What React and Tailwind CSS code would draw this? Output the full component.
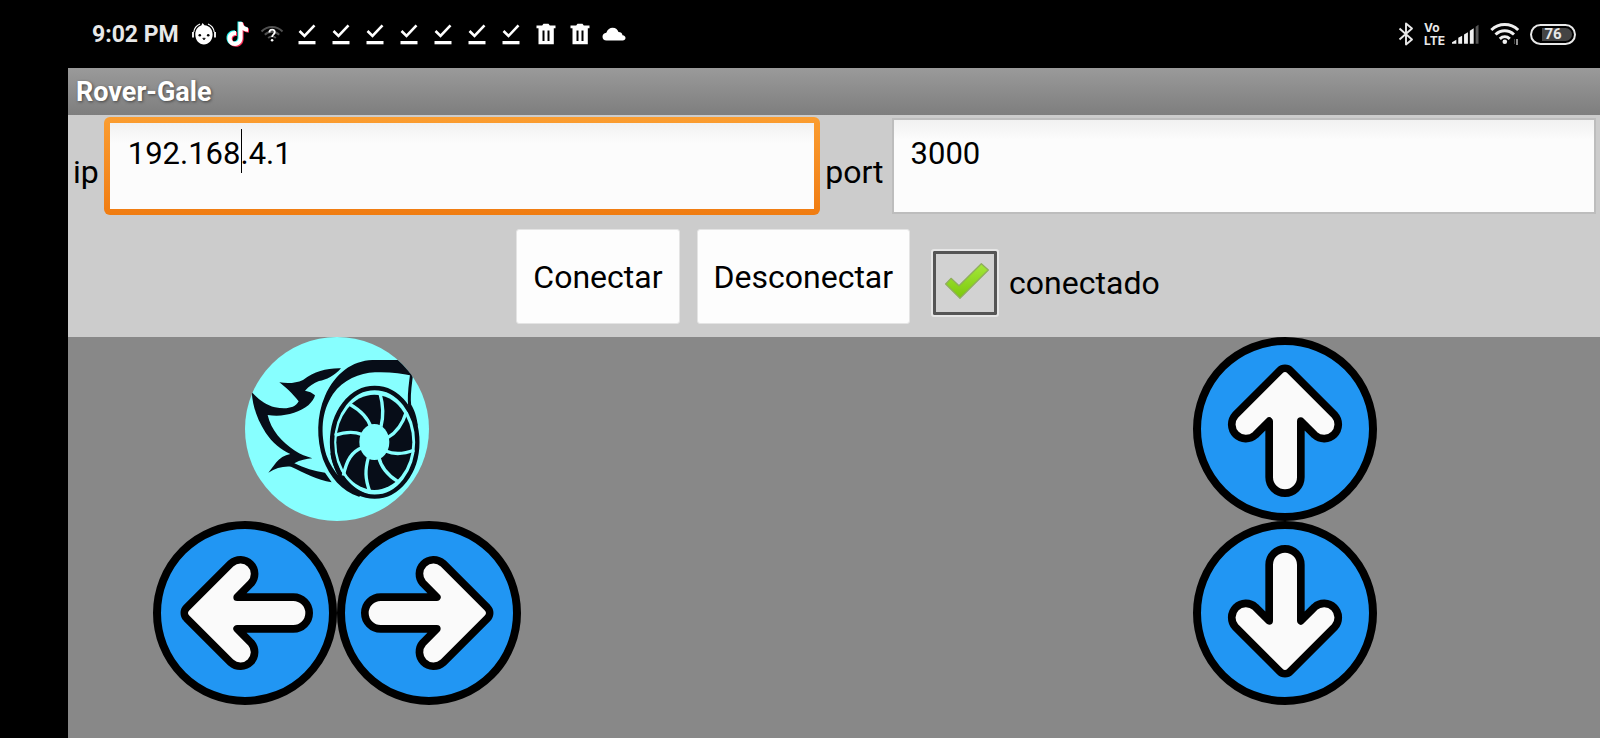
import React from 'react';

function AvatarIcon() {
  return (
    <svg viewBox="0 0 24 24" className="h-6 w-6" aria-hidden="true">
      <path d="M10.500 1l2 2.200C17.800 3.600 20.600 7.500 20.600 12.500c0 5.800-4 10-8.700 10s-8.600-4.200-8.600-10C3.300 8 5.500 4.800 9.300 3.500z" fill="#fff" />
      <path d="M8 2C4.500 3.500 2.300 6 1.800 10M16 2c3.500 1.500 5.700 4 6.200 8" stroke="#fff" fill="none" strokeWidth="1.200" />
      <path d="M1 10v5.500M23 10v5.500" stroke="#fff" strokeWidth="1.800" />
      <circle cx="7.800" cy="13.200" r="1.300" fill="#000" />
      <circle cx="16.200" cy="13.200" r="1.300" fill="#000" />
      <path d="M10.700 16.200h2.600L12 18z" fill="#000" stroke="#000" strokeWidth=".6" />
    </svg>
  );
}

const NOTE = 'M12.500 0h4.100c.2 3.200 2.400 5.300 5.400 5.600v4.200c-2 0-3.800-.6-5.400-1.700v8c0 4.300-3.200 7.900-7.600 7.900S1.500 20.500 1.500 16.500c0-4.500 3.700-7.900 8.500-7.500v4.300c-2.300-.6-4.300.9-4.300 3.100 0 1.900 1.500 3.400 3.400 3.400 2 0 3.400-1.500 3.400-3.700z';

function NoteIcon() {
  return (
    <svg viewBox="-1 -1 26 26" className="h-[26px] w-[26px]" aria-hidden="true">
      <path d={NOTE} fill="#25f4ee" transform="translate(-1 -.6)" />
      <path d={NOTE} fill="#fe2c55" transform="translate(1 .8)" />
      <path d={NOTE} fill="#fff" />
    </svg>
  );
}

function WifiUnknownIcon() {
  return (
    <svg viewBox="0 0 24 24" className="h-6 w-6" aria-hidden="true">
      <g fill="none" stroke="#505050" strokeWidth="2">
        <path d="M1.500 9.500C7.500 3.500 16.500 3.500 22.500 9.500" />
        <path d="M4.800 12.800c4.200-4 10.200-4 14.400 0" />
        <path d="M8.200 16c2.200-2 5.400-2 7.600 0" />
      </g>
      <path d="M9.300 10.500c.1-4 5.700-3.700 5.500-.4-.1 2.200-2.700 2.300-2.700 5" fill="none" stroke="#fff" strokeWidth="1.800" />
      <circle cx="12.100" cy="18.300" r="1.300" fill="#fff" />
    </svg>
  );
}

function DoneIcon() {
  return (
    <svg viewBox="0 0 18 22" className="h-[22px] w-[18px]" aria-hidden="true">
      <path d="M1.500 8l5 5L16.500 2.300" fill="none" stroke="#fff" strokeWidth="2.600" />
      <path d="M.5 18h17v3.300H.5z" fill="#fff" />
    </svg>
  );
}

function TrashIcon() {
  return (
    <svg viewBox="0 0 20 22" className="h-[22px] w-5" aria-hidden="true">
      <path fill="#fff" fillRule="evenodd" d="M.5 2.500h5.700L7.500.8h5l1.300 1.700h5.700v2.800h-1.700v16H2.500v-16H.5zM6.500 7.500v10.500h2V7.500zm5 0v10.500h2V7.500z" />
    </svg>
  );
}

function CloudIcon() {
  return (
    <svg viewBox="0 0 24 14" className="h-[14px] w-6" aria-hidden="true">
      <path fill="#fff" d="M4.500 13.500C2 13.500.5 12 .5 9.800.5 7.500 2 6 4.300 5.800 5.500 2.500 8 .8 10.500.8c3.500 0 5.200 2 6 4.300 2.300 0 3.600 1 4 3.200 2 .2 3 1.400 3 2.800 0 1.500-1.200 2.400-2.800 2.400z" />
    </svg>
  );
}

const NOTIFICATIONS = [
  AvatarIcon, NoteIcon, WifiUnknownIcon,
  DoneIcon, DoneIcon, DoneIcon, DoneIcon, DoneIcon, DoneIcon, DoneIcon,
  TrashIcon, TrashIcon, CloudIcon,
];

function StatusBar() {
  return (
    <header className="flex h-[68px] items-center justify-between bg-black pr-6 pl-[92px] text-[#e8e8e8]">
      <div className="flex items-center">
        <span className="w-[95px] pt-0.5 text-[23px] font-bold whitespace-nowrap">9:02 PM</span>
        <ul className="flex w-[444px]">
          {NOTIFICATIONS.map((Icon, i) => (
            <li key={i} className="flex flex-1 items-center justify-center"><Icon /></li>
          ))}
        </ul>
      </div>
      <div className="flex items-center">
        <svg viewBox="0 0 16 24" className="mr-2.5 h-6 w-4" aria-hidden="true">
          <path d="M1.500 6.500l12.500 11-6 5V1.500l6 5-12.500 11" fill="none" stroke="#e8e8e8" strokeWidth="1.900" strokeLinejoin="round" />
        </svg>
        <span className="mr-1.5 flex w-[22px] flex-col font-['Inter',sans-serif] text-xs leading-[13px] font-bold">
          <span>Vo</span>
          <span>LTE</span>
        </span>
        <svg viewBox="0 0 28 20" className="mr-[11px] h-5 w-[27px]" aria-hidden="true">
          <path d="M0 20v-1.500l4.500-2.500V20zM6.500 20v-6l4-2.200V20zM12.500 20v-9.500l4-2.300V20zM18.500 20V6.500l4-2.500V20z" fill="#f0f0f0" />
          <path d="M24.500 20V2.500l3-2V20z" fill="#555" />
        </svg>
        <svg viewBox="0 0 30 24" className="mr-2.5 h-6 w-[30px]" aria-hidden="true">
          <g fill="none" stroke="#f0f0f0" strokeWidth="3">
            <path d="M1.300 8C9 .8 20.500.8 28.200 8" />
            <path d="M5.500 12.500c5.500-5 13-5 18.500 0" />
            <path d="M9.800 16.800c3-2.700 7-2.700 10 0" />
          </g>
          <circle cx="14.800" cy="19.800" r="2.300" fill="#f0f0f0" />
          <path d="M27 17v6" stroke="#ddd" strokeWidth="1.300" />
          <path d="M24.500 17v5" stroke="#444" />
        </svg>
        <span className="flex h-[21px] w-[46px] items-center justify-center rounded-full border-2 border-[#e8e8e8] bg-[linear-gradient(90deg,#000_25%,#444_25%)] bg-clip-content p-0.5 text-[15px] font-bold">76</span>
      </div>
    </header>
  );
}

const ARROW = 'M-15.500-175.500L-149-42A42.500 42.500 0 0 0-89 18L-47.500-23.500V145A47.500 47.500 0 0 0 47.500 145V-23.500L89 18A42.500 42.500 0 0 0 149-42L15.500-175.500A22 22 0 0 0-15.500-175.500Z';

function ArrowButton({ label, angle }) {
  return (
    <button type="button" aria-label={label} className="block h-[184px] w-[184px] rounded-full">
      <svg viewBox="-276 -276 552 552" className="h-full w-full" aria-hidden="true">
        <circle r="264" fill="#2196f3" stroke="#000" strokeWidth="24" />
        <path d={ARROW} transform={`rotate(${angle})`} fill="#fafafa" stroke="#000" strokeWidth="23" strokeLinejoin="round" />
      </svg>
    </button>
  );
}

function TurboButton() {
  return (
    <button type="button" aria-label="Turbo" className="block h-[184px] w-[184px] rounded-full">
      <svg viewBox="30 21 552 552" className="h-full w-full" aria-hidden="true">
        <clipPath id="turbo-disc"><circle cx="306" cy="297" r="276" /></clipPath>
        <g clipPath="url(#turbo-disc)">
          <path d="M30 21h552v552H30z" fill="#87ffff" />
          <g fill="#070d18">
            <path d="M318 115C275 114 240 124 204 150C182 160 158 161 133 157C150 170 172 190 191 214C180 236 150 238 120 232C92 224 72 210 50 186C54 235 68 270 92 308C112 338 138 358 166 372C148 376 134 384 124 397L100 428C122 414 144 408 168 410C208 428 246 450 290 457L270 428C238 424 208 414 178 400C196 390 214 386 232 385C214 378 196 374 180 362C140 336 108 300 98 255C145 262 190 250 220 226C230 216 238 206 240 196C232 188 222 184 210 182C222 168 236 160 252 153C274 150 298 138 318 115Z" />
            <path d="M500 90H412C352 92 300 130 270 198C244 258 244 326 264 388C284 440 320 484 372 500L392 490C330 470 292 425 274 375C256 310 258 246 294 192C326 148 372 130 420 127C460 125 500 130 536 138V90Z" />
          </g>
          <path d="M530 130C526 165 520 195 524 225" fill="none" stroke="#070d18" strokeWidth="9" />
          <path d="M519 190L520 236L549 290C546 262 538 238 527 222Z" fill="#070d18" />
          <ellipse cx="419" cy="337" rx="128" ry="163" fill="#87ffff" stroke="#070d18" strokeWidth="13" />
          <path d="M286 370C296 430 330 485 390 500L405 493C350 480 312 430 296 372Z" fill="#070d18" />
          <ellipse cx="418" cy="337" rx="114" ry="143" fill="#070d18" />
          <g fill="none" stroke="#87ffff" strokeWidth="10">
            <path d="M435 190C444 222 445 262 438 290" />
            <path d="M514 246C502 285 484 308 458 323" />
            <path d="M538 360C505 373 475 373 452 363" />
            <path d="M489 455C460 437 438 415 431 380" />
            <path d="M404 484C390 445 390 420 400 383" />
            <path d="M325 437C335 390 350 365 382 353" />
            <path d="M299 316C325 307 355 303 380 313" />
            <path d="M343 222C380 243 400 265 408 293" />
          </g>
          <ellipse cx="418" cy="336" rx="45" ry="54" fill="#87ffff" />
        </g>
      </svg>
    </button>
  );
}

const FIELD = 'block w-full min-w-0 bg-[#fcfcfc] bg-[linear-gradient(#f1f1f1,#fcfcfc_20px)] pb-[26px] text-[31px] leading-9 text-black outline-none';
const ACTION = 'h-[95px] rounded-[3px] border border-[#e4e4e4] bg-[#fdfdfd] px-4';

function ConnectionPanel() {
  return (
    <section className="bg-[#ccc] pb-[13px] text-[32px] leading-9 text-black">
      <div className="flex items-center pt-0.5">
        <label htmlFor="ip" className="px-[5px] pt-3">ip</label>
        <div className="relative min-w-0 flex-1 rounded-md bg-linear-to-b from-[#fb9d30] to-[#f07c10] p-1.5">
          <input id="ip" type="text" defaultValue="192.168.4.1" className={`${FIELD} h-[86px] pl-[18px]`} />
          <span className="absolute top-3 left-[137px] h-11 w-px bg-black" aria-hidden="true" />
        </div>
        <label htmlFor="port" className="px-[5px] pt-3">port</label>
        <div className="min-w-0 flex-1 pr-1 pl-[3px]">
          <input id="port" type="text" defaultValue="3000" className={`${FIELD} h-24 border-2 border-[#bdbdbd] pl-[17px]`} />
        </div>
      </div>
      <div className="flex items-start justify-center gap-[17px] pt-[14px] pl-2">
        <button type="button" className={ACTION}>Conectar</button>
        <button type="button" className={ACTION}>Desconectar</button>
        <label className="flex items-center gap-2.5 pt-5 pl-1">
          <span className="relative block h-[68px] w-[68px]">
            <input type="checkbox" defaultChecked className="block h-full w-full appearance-none rounded-[3px] border-2 border-[#e6e6e6] bg-[#d2d2d2] shadow-[inset_0_0_0_3px_#555]" />
            <svg viewBox="0 0 204 204" className="pointer-events-none absolute inset-0 h-full w-full" aria-hidden="true">
              <defs>
                <linearGradient id="tick" x1="0" y1="0" x2="0" y2="1">
                  <stop offset="0" stopColor="#a4e83a" />
                  <stop offset="1" stopColor="#7cc80c" />
                </linearGradient>
              </defs>
              <path d="M44 105L60 88L84 110L151 44L172 63L87 148Z" fill="url(#tick)" stroke="#8fae5c" strokeWidth="4" strokeLinejoin="round" />
            </svg>
          </span>
          conectado
        </label>
      </div>
    </section>
  );
}

export default function App() {
  return (
    <div className="flex min-h-screen flex-col bg-black font-['Roboto',sans-serif]">
      <StatusBar />
      <main className="ml-[68px] flex flex-1 flex-col bg-[#888]">
        <h1 className="bg-linear-to-b from-[#9a9a9a] to-[#7e7e7e] px-2 pt-2 pb-[7px] text-[27px] leading-8 font-bold text-white [text-shadow:1px_1px_3px_#444]">Rover-Gale</h1>
        <ConnectionPanel />
        <section className="grid flex-1 grid-cols-[538fr_364fr_630fr] items-start">
          <div className="flex flex-col items-center">
            <TurboButton />
            <div className="flex">
              <ArrowButton label="Izquierda" angle={-90} />
              <ArrowButton label="Derecha" angle={90} />
            </div>
          </div>
          <div className="col-start-3 flex flex-col items-center">
            <ArrowButton label="Adelante" angle={0} />
            <ArrowButton label="Atrás" angle={180} />
          </div>
        </section>
      </main>
    </div>
  );
}
